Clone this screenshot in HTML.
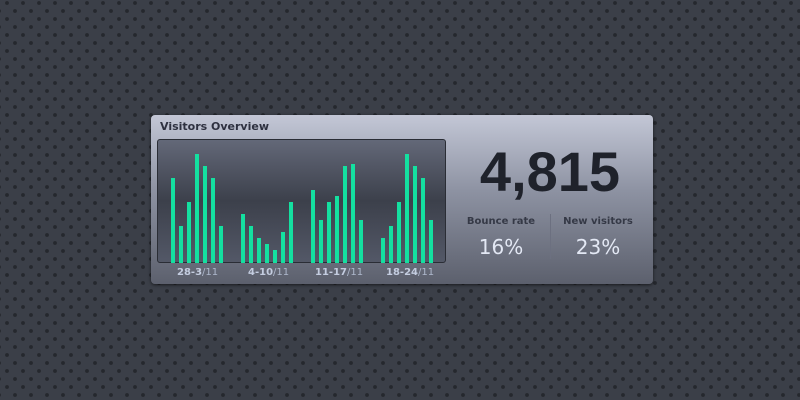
<!DOCTYPE html>
<html><head><style>
html,body{margin:0;padding:0}
body{width:800px;height:400px;overflow:hidden;position:relative;background-color:#3b3f48;
background-image:radial-gradient(circle at 3px 3px,#25282e 1.6px,transparent 2.3px),radial-gradient(circle at 11px 11px,#25282e 1.6px,transparent 2.3px);
background-size:16px 16px;background-position:4px 0;font-family:"DejaVu Sans","Liberation Sans",sans-serif}
.panel{position:absolute;left:151px;top:115px;width:502px;height:169px;border-radius:4px;background:linear-gradient(#c3c7d6,#8d92a2 45%,#5c606d);box-shadow:0 1px 3px rgba(0,0,0,.6)}
.title{position:absolute;left:9px;top:5px;font-size:11px;font-weight:bold;color:#2e3140}
.chart{position:absolute;left:6px;top:24px;width:287px;height:122px;border:1px solid #2a2d35;border-radius:3px;background:linear-gradient(#636878,#3c404b 50%,#535867)}
.bar{position:absolute;width:4px;bottom:-1px;background:#14e0a0}
.lbl{position:absolute;top:152px;font-size:10px;font-weight:bold;color:#c4cde0}
.lbl span{font-weight:normal;color:#aeb8cc}
.big{position:absolute;left:300px;top:24px;width:198px;text-align:center;font-family:"Liberation Sans",sans-serif;font-size:56px;font-weight:bold;color:#1f222b}
.sub{position:absolute;top:101px;width:98px;text-align:center;font-size:10px;font-weight:bold;color:#353946}
.pct{position:absolute;top:120px;width:98px;text-align:center;font-size:20px;color:#e3e8f4}
.div{position:absolute;left:399px;top:99px;width:1px;height:45px;background:#6c7080}
</style></head><body>
<div class="panel">
<div class="title">Visitors Overview</div>
<div class="chart" id="c"></div>
<div class="lbl" style="left:26px">28-3<span>/11</span></div>
<div class="lbl" style="left:97px">4-10<span>/11</span></div>
<div class="lbl" style="left:164px">11-17<span>/11</span></div>
<div class="lbl" style="left:235px">18-24<span>/11</span></div>
<div class="big">4,815</div>
<div class="sub" style="left:301px">Bounce rate</div>
<div class="sub" style="left:398px">New visitors</div>
<div class="pct" style="left:301px">16%</div>
<div class="pct" style="left:398px">23%</div>
<div class="div"></div>
</div>
<script>
var g=[[171,[178,226,202,154,166,178,226]],[241,[214,226,238,244,250,232,202]],[311,[190,220,202,196,166,164,220]],[381,[238,226,202,154,166,178,220]]];
var c=document.getElementById('c'),h='';
g.forEach(function(x){x[1].forEach(function(t,i){h+='<div class="bar" style="left:'+(x[0]+i*8-158)+'px;height:'+(263-t)+'px"></div>';});});
c.innerHTML=h;
</script>
</body></html>
